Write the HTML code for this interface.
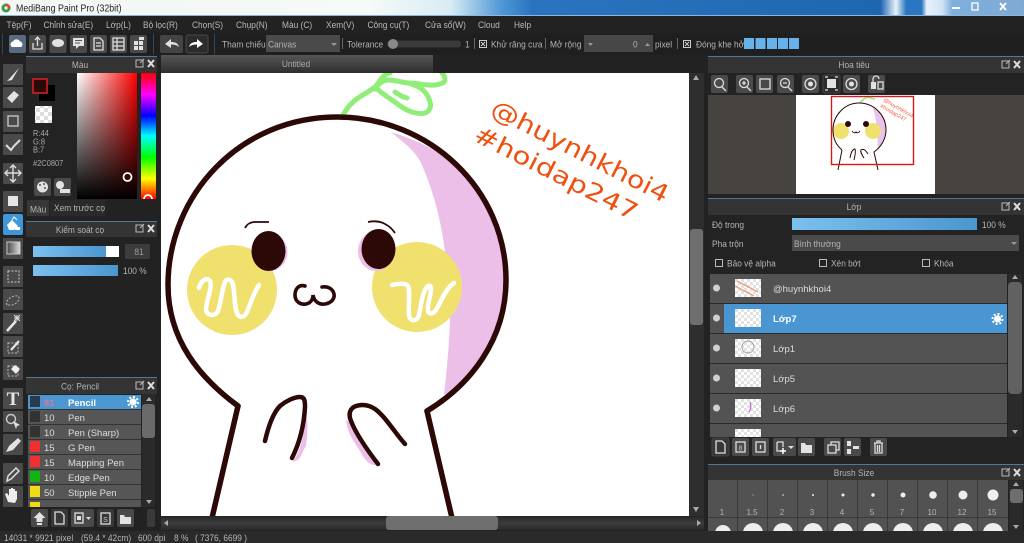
<!DOCTYPE html>
<html><head><meta charset="utf-8"><title>MediBang Paint Pro</title>
<style>
html,body{margin:0;padding:0;background:#222;width:1024px;height:543px;overflow:hidden}
svg{display:block}
text{font-family:"Liberation Sans",sans-serif;font-size:9.5px;fill:#b4b4b4;transform-box:fill-box;transform-origin:0 50%;transform:scaleX(.88)}
text.c{transform-origin:50% 50%}
text.r{fill:#ddd;transform:none}
text.n{transform:none}
.m text{fill:#b8b8b8}
.b{fill:#4a4a4a}
.c{text-anchor:middle}
.i{fill:none;stroke:#ddd;stroke-width:1.3}
.f{fill:#e2e2e2}
</style></head><body>
<svg width="1024" height="543" viewBox="0 0 1024 543" xmlns="http://www.w3.org/2000/svg">
<defs>
<linearGradient id="tb" x1="0" x2="1" y1="0" y2="0">
<stop offset="0" stop-color="#f3f6f2"/><stop offset=".36" stop-color="#f6faf8"/><stop offset=".44" stop-color="#d8ecf4"/><stop offset=".49" stop-color="#4f97d6"/><stop offset=".52" stop-color="#2a74bf"/><stop offset=".86" stop-color="#1f66b0"/><stop offset=".875" stop-color="#e8f2fb"/><stop offset=".885" stop-color="#2a76c0"/><stop offset=".9" stop-color="#2a76c0"/><stop offset=".905" stop-color="#e8f2fb"/><stop offset=".92" stop-color="#d0e4f5"/><stop offset=".93" stop-color="#7fb0dc"/><stop offset="1" stop-color="#7fa9d0"/>
</linearGradient>
<linearGradient id="blue" x1="0" x2="1" y1="0" y2="0"><stop offset="0" stop-color="#7cc0f0"/><stop offset="1" stop-color="#4b96cf"/></linearGradient>
<linearGradient id="tab" x1="0" x2="0" y1="0" y2="1"><stop offset="0" stop-color="#565656"/><stop offset="1" stop-color="#2e2e2e"/></linearGradient>
<linearGradient id="sb" x1="0" x2="0" y1="0" y2="1"><stop offset="0" stop-color="#262626"/><stop offset=".5" stop-color="#3c3c3c"/><stop offset="1" stop-color="#2a2a2a"/></linearGradient>
<linearGradient id="sat" x1="0" x2="1" y1="0" y2="0"><stop offset="0" stop-color="#fff"/><stop offset="1" stop-color="#f00"/></linearGradient>
<linearGradient id="val" x1="0" x2="0" y1="0" y2="1"><stop offset="0" stop-color="#000" stop-opacity="0"/><stop offset="1" stop-color="#000"/></linearGradient>
<linearGradient id="hue" x1="0" x2="0" y1="0" y2="1"><stop offset="0" stop-color="#f00"/><stop offset=".17" stop-color="#f0f"/><stop offset=".34" stop-color="#00f"/><stop offset=".5" stop-color="#0ff"/><stop offset=".67" stop-color="#0f0"/><stop offset=".84" stop-color="#ff0"/><stop offset="1" stop-color="#f00"/></linearGradient>
<linearGradient id="grad" x1="0" x2="1" y1="0" y2="0"><stop offset="0" stop-color="#444"/><stop offset="1" stop-color="#ddd"/></linearGradient>
<pattern id="chk" width="8" height="8" patternUnits="userSpaceOnUse"><rect width="8" height="8" fill="#fff"/><rect width="4" height="4" fill="#ddd"/><rect x="4" y="4" width="4" height="4" fill="#ddd"/></pattern>
<pattern id="chk2" width="6" height="6" patternUnits="userSpaceOnUse"><rect width="6" height="6" fill="#fff"/><rect width="3" height="3" fill="#e2e2e2"/><rect x="3" y="3" width="3" height="3" fill="#e2e2e2"/></pattern>
<g id="dock"><rect x="0" y="0" width="7" height="7" fill="none" stroke="#bbb"/><path d="M4 3l4-4" stroke="#bbb"/><path d="M12 0l6 7M18 0l-6 7" stroke="#ddd" stroke-width="2"/></g>
<g id="gear"><circle r="3.6" fill="#fff"/><circle r="5" fill="none" stroke="#fff" stroke-width="2" stroke-dasharray="2 1.9"/></g>
</defs>

<rect width="1024" height="543" fill="#222"/>

<!-- title bar -->
<rect width="1024" height="15" fill="url(#tb)"/>
<rect y="15" width="1024" height="1" fill="#8db6dc"/>
<circle cx="6" cy="8" r="4.5" fill="#3a9a4a"/><path d="M6 3.5a4.5 4.5 0 0 1 4.5 4.5H6z" fill="#d94c3a"/><circle cx="6" cy="8" r="1.6" fill="#fff"/>
<text x="16" y="11.5" style="font-size:10px;fill:#222">MediBang Paint Pro (32bit)</text>
<rect x="952" y="7" width="8" height="2" fill="#fff"/>
<rect x="972" y="3" width="6" height="7" fill="none" stroke="#fff" stroke-width="1.3"/>
<path d="M1000 3l6 7M1006 3l-6 7" stroke="#fff" stroke-width="1.8"/>

<!-- menu -->
<g class="m">
<text x="6.5" y="28">Tệp(F)</text><text x="43.5" y="28">Chỉnh sửa(E)</text><text x="106" y="28">Lớp(L)</text><text x="143" y="28">Bộ lọc(R)</text><text x="192" y="28">Chọn(S)</text><text x="236" y="28">Chụp(N)</text><text x="282" y="28">Màu (C)</text><text x="326" y="28">Xem(V)</text><text x="367.5" y="28">Công cụ(T)</text><text x="425" y="28">Cửa sổ(W)</text><text x="478" y="28">Cloud</text><text x="514" y="28">Help</text>
</g>

<!-- top toolbar -->
<rect y="33" width="1024" height="22" fill="#1f1f1f"/>
<rect x="2" y="34" width="1" height="20" fill="#2f4a60"/>
<rect x="153" y="34" width="1" height="20" fill="#2f4a60"/>
<rect x="214" y="34" width="1" height="20" fill="#2f4a60"/>
<rect x="9" y="35" width="17" height="18" rx="2" fill="#596b80"/>
<path d="M12 47a3 3 0 0 1 1-5.500 4 4 0 0 1 7 0 3 3 0 0 1 1 5.500z" fill="#fff"/>
<rect x="29" y="35" width="17" height="18" rx="2" class="b"/>
<path d="M33 43v6h9v-6M37.500 46v-8M35 40l2.500-3 2.500 3" class="i"/>
<rect x="49.500" y="35" width="17" height="18" rx="2" class="b"/>
<ellipse cx="58" cy="43" rx="6" ry="4" class="f"/>
<rect x="70" y="35" width="17" height="18" rx="2" class="b"/>
<rect x="73" y="38" width="11" height="8" class="f"/><path d="M76 46v3l3-3z" class="f"/><path d="M75 40.500h7M75 43h5" stroke="#555"/>
<rect x="90" y="35" width="17" height="18" rx="2" class="b"/>
<path d="M94 38h6l3 3v9h-9z" class="i"/><path d="M96 43h5M96 46h5" class="i"/>
<rect x="110" y="35" width="17" height="18" rx="2" class="b"/>
<rect x="113" y="38" width="11" height="12" class="i"/><path d="M113 42h11M113 46h11M117 38v12" class="i"/>
<rect x="130" y="35" width="17" height="18" rx="2" class="b"/>
<rect x="134" y="41" width="4" height="4" class="f"/><rect x="139" y="41" width="4" height="4" class="f"/><rect x="134" y="46" width="4" height="4" class="f"/><rect x="139" y="46" width="4" height="4" class="f"/><rect x="139" y="37" width="5" height="3" class="f"/>
<rect x="160" y="35" width="23" height="18" rx="2" fill="#444"/>
<path d="M165 44l6-5v3c4 0 7 1 8 5-2-2-5-2.500-8-2.500V48z" class="f"/>
<rect x="186" y="35" width="22" height="18" rx="2" fill="#2c2c2c" stroke="#4a4a4a"/>
<path d="M203 44l-6-5v3c-4 0-7 1-8 5 2-2 5-2.500 8-2.500V48z" fill="#fff"/>
<text x="222" y="47.500">Tham chiếu</text>
<rect x="266" y="35" width="74" height="17" fill="#4a4a4a"/>
<text x="268" y="47.500">Canvas</text><path d="M331 43h6l-3 3z" fill="#999"/>
<rect x="342" y="38" width="1" height="11" fill="#666"/>
<text x="347" y="47.500">Tolerance</text>
<rect x="387" y="40.500" width="74" height="7" rx="3" fill="#3a3a3a"/>
<circle cx="393" cy="44" r="5" fill="#8a8a8a"/>
<text x="465" y="47.500">1</text>
<rect x="474" y="38" width="1" height="11" fill="#666"/>
<rect x="479.500" y="40.500" width="7" height="7" fill="none" stroke="#ccc"/><path d="M481 42l4 4M485 42l-4 4" stroke="#ccc"/>
<text x="491" y="47.500">Khử răng cưa</text>
<rect x="545" y="38" width="1" height="11" fill="#666"/>
<text x="550" y="47.500">Mở rộng</text>
<rect x="584" y="35" width="69" height="17" fill="#474747"/>
<path d="M588 43h5l-2.500 3z" fill="#999"/><path d="M645 46h5l-2.500-3z" fill="#999"/>
<text x="633" y="47.500">0</text>
<text x="655" y="47.500">pixel</text>
<rect x="677" y="38" width="1" height="11" fill="#666"/>
<rect x="683.500" y="40.500" width="7" height="7" fill="none" stroke="#ccc"/><path d="M685 42l4 4M689 42l-4 4" stroke="#ccc"/>
<text x="696" y="47.500">Đóng khe hở</text>
<rect x="744" y="38" width="10" height="11" fill="#67b2ea"/><rect x="755.500" y="38" width="10" height="11" fill="#67b2ea"/><rect x="767" y="38" width="10" height="11" fill="#67b2ea"/><rect x="778" y="38" width="10" height="11" fill="#67b2ea"/><rect x="789" y="38" width="10" height="11" fill="#67b2ea"/>

<!-- left tools -->
<g id="tools">
<rect x="3" y="64" width="20" height="21" rx="1" class="b"/><path d="M7 81l3-3 9-10-7 12z" class="f"/>
<rect x="3" y="87" width="20" height="21" rx="1" class="b"/><path d="M7 98l7-7 5 4-7 8z" class="f"/>
<rect x="3" y="111" width="20" height="21" rx="1" class="b"/><rect x="8" y="116" width="10" height="10" fill="none" stroke="#bbb" stroke-width="1.500"/>
<rect x="3" y="134" width="20" height="21" rx="1" class="b"/><path d="M6 145l5 5 3-4 6-6" fill="none" stroke="#ddd" stroke-width="2"/>
<rect x="3" y="163" width="20" height="21" rx="1" class="b"/><path d="M13 165v17M5 173h16M10 168l3-3 3 3M10 179l3 3 3-3M8 170l-3 3 3 3M18 170l3 3-3 3" fill="none" stroke="#ddd" stroke-width="1.400"/>
<rect x="3" y="191" width="20" height="21" rx="1" class="b"/><rect x="8" y="196" width="10" height="10" fill="#e6e6e6"/>
<rect x="3" y="214" width="20" height="21" rx="2" fill="#3f97d8"/><path d="M7 225l5-5 6 6-4 4H9z" fill="#fff"/><path d="M12 220l2-3 3 3" fill="none" stroke="#fff"/><rect x="15" y="227" width="5" height="3" fill="#fff"/>
<rect x="3" y="238" width="20" height="21" rx="1" class="b"/><rect x="7" y="242" width="13" height="12" fill="url(#grad)" stroke="#ccc"/>
<rect x="3" y="266" width="20" height="21" rx="1" class="b"/><rect x="8" y="271" width="11" height="11" fill="none" stroke="#ccc" stroke-dasharray="2 1.500"/>
<rect x="3" y="289" width="20" height="21" rx="1" class="b"/><path d="M7 305c-2-5 5-10 11-9 3 2-1 9-7 9z" fill="none" stroke="#bbb" stroke-dasharray="2 1.500"/>
<rect x="3" y="313" width="20" height="21" rx="1" class="b"/><path d="M7 331l9-10" stroke="#e6e6e6" stroke-width="2.500"/><path d="M17 315v6M14 318h6M14 315l6 6M20 315l-6 6" stroke="#ddd"/>
<rect x="3" y="336" width="20" height="21" rx="1" class="b"/><rect x="8" y="343" width="10" height="10" fill="none" stroke="#bbb" stroke-dasharray="2 1.500"/><path d="M11 350l8-9" stroke="#e6e6e6" stroke-width="2.200"/>
<rect x="3" y="359" width="20" height="21" rx="1" class="b"/><rect x="8" y="366" width="10" height="10" fill="none" stroke="#bbb" stroke-dasharray="2 1.500"/><path d="M11 369l4-4 5 4-4 5z" fill="#eee"/>
<rect x="3" y="388" width="20" height="21" rx="1" class="b"/><text x="13" y="405" class="c n" style="font-family:'Liberation Serif',serif;font-size:19px;font-weight:bold;fill:#e6e6e6">T</text>
<rect x="3" y="411" width="20" height="21" rx="1" class="b"/><circle cx="11" cy="419" r="4.500" fill="none" stroke="#ccc" stroke-width="1.400"/><path d="M13 421l7 4-3 1-1 3z" class="f"/>
<rect x="3" y="434" width="20" height="21" rx="1" class="b"/><path d="M6 452l3-6 9-8 3 3-8 9z" class="f"/>
<rect x="3" y="463" width="20" height="21" rx="1" class="b"/><path d="M7 481l1-5 8-8 3 3-8 8z" fill="none" stroke="#ddd" stroke-width="1.500"/>
<rect x="3" y="486" width="20" height="21" rx="1" class="b"/><path d="M8 502l-3-8 2-1 2 3v-7h2v5-6h2v6-5h2v6-4h2v8l-2 4z" fill="#eee"/>
</g>

<!-- colour panel -->
<rect x="26" y="56" width="131" height="1" fill="#4c7a9c"/>
<rect x="26" y="57" width="131" height="16" fill="#343434"/>
<text x="80" y="68" class="c">Màu</text>
<use href="#dock" x="136" y="60"/>
<rect x="26" y="73" width="131" height="127" fill="#232323"/>
<rect x="39" y="85" width="16" height="16" fill="#000"/>
<rect x="33" y="79" width="14" height="14" fill="#2c0807" stroke="#d22" stroke-width="1.500"/>
<rect x="35" y="106" width="17" height="17" fill="url(#chk)"/>
<text x="33" y="136" style="font-size:8.500px;fill:#aaa">R:44</text>
<text x="33" y="144.500" style="font-size:8.500px;fill:#aaa">G:8</text>
<text x="33" y="152.500" style="font-size:8.500px;fill:#aaa">B:7</text>
<text x="33" y="166" style="font-size:8.500px;fill:#aaa">#2C0807</text>
<rect x="34" y="178" width="17" height="18" rx="2" class="b"/><circle cx="42.500" cy="187" r="5.500" class="f"/><circle cx="40" cy="185" r="1" fill="#555"/><circle cx="44" cy="184" r="1" fill="#555"/><circle cx="45" cy="188" r="1" fill="#555"/>
<rect x="54" y="178" width="17" height="18" rx="2" class="b"/><circle cx="60" cy="185" r="4" class="f"/><rect x="60" y="189" width="10" height="4" class="f"/>
<rect x="77" y="73" width="60" height="126" fill="url(#sat)"/>
<rect x="77" y="73" width="60" height="126" fill="url(#val)"/>
<rect x="141" y="73" width="15" height="126" fill="url(#hue)"/>
<circle cx="127.500" cy="177" r="4" fill="none" stroke="#fff" stroke-width="1.800"/>
<path d="M144 199a4 4 0 0 1 8 0" fill="none" stroke="#fff" stroke-width="1.800"/>
<rect x="26" y="200" width="131" height="16" fill="#222"/>
<rect x="27" y="200" width="22" height="16" fill="#373737"/>
<rect x="50" y="200" width="55" height="16" fill="#2a2a2a"/>
<text x="30" y="212.500">Màu</text>
<text x="54" y="211">Xem trước cọ</text>

<!-- brush control -->
<rect x="26" y="221" width="131" height="1" fill="#4c7a9c"/>
<rect x="26" y="222" width="131" height="15" fill="#343434"/>
<text x="80" y="233" class="c">Kiểm soát cọ</text>
<use href="#dock" x="136" y="225"/>
<rect x="33" y="246" width="86" height="11" fill="#fff"/>
<rect x="33" y="246" width="73" height="11" fill="url(#blue)"/>
<rect x="125" y="244" width="25" height="15" rx="1" fill="#3c3c3c"/>
<text x="139" y="255" class="c" style="fill:#999">81</text>
<rect x="33" y="265" width="85" height="11" fill="url(#blue)"/>
<text x="123" y="274">100 %</text>

<!-- brush list -->
<rect x="26" y="377" width="131" height="1" fill="#4c7a9c"/>
<rect x="26" y="378" width="131" height="16" fill="#343434"/>
<text x="80" y="389.500" class="c">Cọ: Pencil</text>
<use href="#dock" x="136" y="382"/>
<rect x="28" y="395" width="113" height="112" fill="#565656"/>
<rect x="28" y="395" width="113" height="14" fill="#4b97d2"/>
<g fill="#333"><rect x="28" y="409" width="113" height="1"/><rect x="28" y="424" width="113" height="1"/><rect x="28" y="439" width="113" height="1"/><rect x="28" y="454" width="113" height="1"/><rect x="28" y="469" width="113" height="1"/><rect x="28" y="484" width="113" height="1"/><rect x="28" y="499" width="113" height="1"/></g>
<rect x="30" y="396" width="10" height="11" fill="#2b3a4a"/>
<rect x="30" y="411" width="10" height="11" fill="#333"/>
<rect x="30" y="426" width="10" height="11" fill="#333"/>
<rect x="30" y="441" width="10" height="11" fill="#f03030"/>
<rect x="30" y="456" width="10" height="11" fill="#f03030"/>
<rect x="30" y="471" width="10" height="11" fill="#10b510"/>
<rect x="30" y="486" width="10" height="11" fill="#f0dc14"/>
<rect x="30" y="502" width="10" height="5" fill="#f0dc14"/>
<text class="r" x="44" y="406" style="fill:#d77a9a;font-weight:bold">81</text>
<text class="r" x="68" y="406" style="fill:#fff;font-weight:bold">Pencil</text>
<use href="#gear" x="133" y="402"/>
<text class="r" x="44" y="421">10</text><text class="r" x="68" y="421">Pen</text>
<text class="r" x="44" y="436">10</text><text class="r" x="68" y="436">Pen (Sharp)</text>
<text class="r" x="44" y="451">15</text><text class="r" x="68" y="451">G Pen</text>
<text class="r" x="44" y="466">15</text><text class="r" x="68" y="466">Mapping Pen</text>
<text class="r" x="44" y="481">10</text><text class="r" x="68" y="481">Edge Pen</text>
<text class="r" x="44" y="496">50</text><text class="r" x="68" y="496">Stipple Pen</text>
<rect x="142" y="394" width="13" height="113" fill="#2a2a2a"/>
<rect x="142" y="404" width="13" height="34" rx="3" fill="#6a6a6a"/>
<path d="M146 401h6l-3-4zM146 500h6l-3 4z" fill="#aaa"/>
<rect x="31" y="509" width="17" height="18" rx="2" class="b"/><path d="M39.500 512l-6 6h3v4h6v-4h3z" class="f"/><rect x="37" y="523" width="5" height="2" class="f"/>
<rect x="51" y="509" width="17" height="18" rx="2" fill="#383838"/><path d="M55 512h6l3 3v9h-9z" class="i"/>
<rect x="71" y="509" width="23" height="18" rx="2" class="b"/><rect x="75" y="513" width="8" height="10" class="i"/><rect x="77" y="516" width="4" height="4" class="f"/><path d="M86 517h5l-2.500 3z" fill="#ddd"/>
<rect x="97" y="509" width="17" height="18" rx="2" fill="#383838"/><rect x="101" y="513" width="9" height="11" class="i"/><text x="105.500" y="522" class="c n" style="font-size:7px;fill:#ccc">S</text>
<rect x="117" y="509" width="17" height="18" rx="2" class="b"/><path d="M120 515h4l1 2h6v7h-11z" class="f"/>
<rect x="147" y="509" width="8" height="18" rx="2" fill="#3a3a3a"/>

<!-- canvas tab -->
<rect x="161" y="55" width="272" height="18" fill="url(#tab)"/>
<text x="296" y="67" class="c" style="fill:#aaa">Untitled</text>

<!-- canvas -->
<rect x="161" y="73" width="528" height="443" fill="#fff"/>
<svg x="161" y="73" width="528" height="443" viewBox="161 73 528 443">
<path d="M343 115c4-7 9-13 15-17 6-4 12-7 17-11 3-3 6-9 10-12 1-1 3-2 5-2M375 87c5 5 11 9 17 13 7 5 13 10 20 12 6 2 13 2 15 0 4-3 4-7 3-10-1-5-4-9-7-12-5-4-11-6-15-7-7-1-14-3-20-3-5 0-9 3-13 9M408 83c9 0 20 3 27 2 5-1 10-2 10-5 0-3-1-5-3-7M395 92c4 3 8 5 12 6" fill="none" stroke="#90ee78" stroke-width="5" stroke-linecap="round" stroke-linejoin="round"/>
<path d="M391 132c14 12 27 20 33 38 12 30 18 55 22 90 7 40 4 80-2 135l19-12c27-33 43-63 43-103 0-90-56-130-115-148z" fill="#ecbfe8"/>
<circle cx="232" cy="290" r="45" fill="#f0e06e"/>
<circle cx="417" cy="287" r="45" fill="#f0e06e"/>
<path d="M199 288c2-8 8-11 11-7 3 6-4 20-4 28 0 7 9 8 12 2 3-8 4-22 7-29 2-4 7-3 8 3 2 9 1 24 5 30 3 4 7 1 9-3 3-7 6-18 12-27" fill="none" stroke="#fff" stroke-width="4.500" stroke-linecap="round" stroke-linejoin="round"/>
<path d="M392 285c5-1 12-2 15 0 4 3 1 20 2 30 1 7 8 7 10 0 2-9 3-22 8-28 2-2 4-2 4 2 0 6-4 16-3 22 1 4 5 3 8-1 4-6 9-21 18-27" fill="none" stroke="#fff" stroke-width="4.500" stroke-linecap="round" stroke-linejoin="round"/>
<ellipse cx="270" cy="252" rx="17.500" ry="19" fill="#ecbfe8"/>
<ellipse cx="376" cy="251" rx="18" ry="20" fill="#ecbfe8"/>
<ellipse cx="268.500" cy="251" rx="17" ry="20" fill="#2c0807"/>
<ellipse cx="378.500" cy="249" rx="17" ry="20" fill="#2c0807"/>
<path d="M245 228c2-4 6-6 10-6h14" fill="none" stroke="#2c0807" stroke-width="1.800"/>
<path d="M368 222c5-1 12-1 17 2 4 2 8 6 10 9" fill="none" stroke="#2c0807" stroke-width="1.800"/>
<path d="M305 286c-6-2-10 3-10 9 0 7 6 10 11 9 5-1 7-5 7-9 1 7 7 10 12 9 6-1 10-5 9-10-1-5-6-8-12-7" fill="none" stroke="#2c0807" stroke-width="3.600" stroke-linecap="round"/>
<path d="M303 404c3 7 2 27-2 40-2 8-6 15-9 18l6-2c4-4 5-10 8-14 2-14 3-30-3-42zM346 420c1 12 8 22 14 31 4 8 9 14 15 14l4-1c-7-10-15-24-21-33-4-5-8-9-12-11z" fill="#ecbfe8"/>
<path d="M238 406c-38-28-70-66-70-121 0-90 72-168 169-168 93 0 169 73 169 163 0 60-36 105-79 131" fill="none" stroke="#2c0807" stroke-width="5.500" stroke-linecap="round" stroke-linejoin="round"/>
<path d="M238 406l-26 112M427 411l25 107" fill="none" stroke="#2c0807" stroke-width="5.500" stroke-linecap="round"/>
<path d="M265 441c3-13 8-28 15-35 6-5 14-9 20-9 5 0 5 5 5 10-1 18-5 35-13 51" fill="none" stroke="#2c0807" stroke-width="4.500" stroke-linecap="round"/>
<path d="M378 464c-10-13-22-30-27-43-3-7-1-13 5-15 7-2 13-1 19 3 10 7 20 24 30 35" fill="none" stroke="#2c0807" stroke-width="4.500" stroke-linecap="round"/>
<g transform="translate(489 114) rotate(27)"><text class="n" textLength="196" lengthAdjust="spacingAndGlyphs" style="font-family:'DejaVu Sans',sans-serif;font-size:24px;fill:#f0500f">@huynhkhoi4</text></g>
<g transform="translate(472 140) rotate(26.700)"><text class="n" textLength="180" lengthAdjust="spacingAndGlyphs" style="font-family:'DejaVu Sans',sans-serif;font-size:24px;fill:#f0500f">#hoidap247</text></g>
</svg>

<!-- scrollbars -->
<rect x="689" y="73" width="15" height="443" fill="#2e2e2e"/>
<rect x="690" y="229" width="13" height="96" rx="3" fill="#6e6e6e"/>
<path d="M693 80h6l-3-5zM693 507h6l-3 5z" fill="#aaa"/>
<rect x="161" y="516" width="543" height="14" fill="url(#sb)"/>
<rect x="386" y="516" width="112" height="14" rx="3" fill="#6e6e6e"/>
<path d="M168 520v6l-4-3zM697 520v6l4-3z" fill="#aaa"/>

<!-- navigator -->
<rect x="708" y="56" width="316" height="1" fill="#4c7a9c"/>
<rect x="708" y="57" width="316" height="16" fill="#343434"/>
<text x="854" y="68" class="c">Hoa tiêu</text>
<use href="#dock" x="1002" y="61"/>
<rect x="708" y="73" width="316" height="22" fill="#232323"/>
<rect x="711" y="75" width="17" height="18" rx="2" class="b"/><circle cx="719" cy="83" r="4.500" class="i"/><path d="M722 87l4 4" class="i"/>
<rect x="736" y="75" width="17" height="18" rx="2" class="b"/><circle cx="744" cy="83" r="4.500" class="i"/><path d="M747 87l4 4M742 83h4M744 81v4" class="i"/>
<rect x="756" y="75" width="17" height="18" rx="2" class="b"/><rect x="760" y="79" width="10" height="10" class="i"/>
<rect x="777" y="75" width="17" height="18" rx="2" class="b"/><circle cx="785" cy="83" r="4.500" class="i"/><path d="M788 87l4 4M783 83h4" class="i"/>
<rect x="802" y="75" width="17" height="18" rx="2" class="b"/><circle cx="810.500" cy="84" r="5.500" class="i"/><circle cx="810.500" cy="84" r="2.500" class="f"/>
<rect x="823" y="75" width="17" height="18" rx="2" fill="#2c2c2c" stroke="#444"/><rect x="827" y="79" width="9" height="9" class="f"/><path d="M825 77h3M835 77h3M825 90h3M835 90h3" class="i"/>
<rect x="843" y="75" width="17" height="18" rx="2" class="b"/><circle cx="851.500" cy="84" r="5.500" class="i"/><circle cx="851.500" cy="84" r="2.500" class="f"/>
<rect x="868" y="75" width="17" height="18" rx="2" class="b"/><rect x="871" y="82" width="5" height="7" class="f"/><rect x="878" y="82" width="5" height="7" class="i"/><path d="M873 82v-3a3 3 0 0 1 6 0" class="i"/>
<rect x="708" y="95" width="316" height="99" fill="#47433f"/>
<rect x="796" y="95" width="139" height="99" fill="#fff"/>
<g>
<path d="M860 103c2-3 5-5 8-6 3 1 5 2 7 2" fill="none" stroke="#90ee78" stroke-width="1.500"/>
<path d="M872 106c8 6 14 14 14 24 0 8-3 14-8 20-1-15-1-33-6-44z" fill="#e8c4ec"/>
<circle cx="841" cy="131" r="8" fill="#f0e06e"/><circle cx="873" cy="131" r="8" fill="#f0e06e"/>
<circle cx="848" cy="124" r="3" fill="#2c0807"/><circle cx="866" cy="124" r="3" fill="#2c0807"/>
<path d="M852 131q2 3 4 1q2 2 4-1" fill="none" stroke="#2c0807" stroke-width=".9"/>
<path d="M842 150c-6-5-9-12-9-20 0-15 12-27 26-27 15 0 27 12 27 27 0 9-5 17-12 22l4 18M842 150l-4 20M850 158c1-6 3-9 5-9 1 3 0 7-1 11M864 158c-2-3-4-6-3-8 3-2 5 1 7 4" fill="none" stroke="#2c0807" stroke-width="1"/>
<g transform="translate(883 101) rotate(30)"><text class="n" style="font-size:5.500px;fill:#f06040">@huynhkhoi4</text></g>
<g transform="translate(880 107) rotate(30)"><text class="n" style="font-size:5.500px;fill:#f06040">#hoidap247</text></g>
</g>
<rect x="831.500" y="96.500" width="82" height="68" fill="none" stroke="#d81818" stroke-width="1.400"/>

<!-- layers -->
<rect x="708" y="198" width="316" height="1" fill="#4c7a9c"/>
<rect x="708" y="199" width="316" height="16" fill="#343434"/>
<text x="854" y="210" class="c">Lớp</text>
<use href="#dock" x="1002" y="203"/>
<rect x="708" y="215" width="316" height="59" fill="#232323"/>
<text x="712" y="228">Độ trong</text>
<rect x="792" y="218" width="185" height="12" fill="url(#blue)"/>
<text x="982" y="228">100 %</text>
<text x="712" y="247">Pha trộn</text>
<rect x="792" y="235" width="227" height="16" fill="#4a4a4a"/>
<text x="794" y="247">Bình thường</text>
<path d="M1011 242h6l-3 3z" fill="#999"/>
<rect x="715.500" y="259.500" width="7" height="7" fill="none" stroke="#bbb"/><text x="727" y="266.500">Bảo vệ alpha</text>
<rect x="819.500" y="259.500" width="7" height="7" fill="none" stroke="#bbb"/><text x="831" y="266.500">Xén bớt</text>
<rect x="922.500" y="259.500" width="7" height="7" fill="none" stroke="#bbb"/><text x="934" y="266.500">Khóa</text>

<rect x="710" y="274" width="297" height="163" fill="#535353"/>
<rect x="724" y="304" width="283" height="29" fill="#4a96d2"/>
<g fill="#2a2a2a"><rect x="710" y="303" width="297" height="1"/><rect x="710" y="333" width="297" height="1"/><rect x="710" y="363" width="297" height="1"/><rect x="710" y="393" width="297" height="1"/><rect x="710" y="423" width="297" height="1"/></g>
<g fill="#d0d0d0"><circle cx="716.500" cy="288" r="3.500"/><circle cx="716.500" cy="318" r="3.500"/><circle cx="716.500" cy="348" r="3.500"/><circle cx="716.500" cy="378" r="3.500"/><circle cx="716.500" cy="408" r="3.500"/></g>
<rect x="735" y="279" width="26" height="18" fill="url(#chk2)"/>
<path d="M737 281l21 11M735 286l19 10" stroke="#eea080" stroke-width="1.500"/>
<rect x="735" y="309" width="26" height="18" fill="url(#chk2)"/>
<rect x="735" y="339" width="26" height="18" fill="url(#chk2)"/>
<circle cx="748" cy="347" r="6" fill="none" stroke="#888" stroke-width=".7"/>
<rect x="735" y="369" width="26" height="18" fill="url(#chk2)"/>
<rect x="735" y="399" width="26" height="18" fill="url(#chk2)"/>
<path d="M750 402c1 3 1 7-1 10" stroke="#c070c8" fill="none" stroke-width="1.300"/>
<rect x="735" y="429" width="26" height="8" fill="url(#chk2)"/>
<text class="r" x="773" y="292">@huynhkhoi4</text>
<text class="r" x="773" y="322" style="fill:#fff;font-weight:bold">Lớp7</text>
<use href="#gear" x="997.500" y="319"/>
<text class="r" x="773" y="352">Lớp1</text>
<text class="r" x="773" y="382">Lớp5</text>
<text class="r" x="773" y="412">Lớp6</text>
<rect x="1008" y="274" width="14" height="163" fill="#2a2a2a"/>
<rect x="1008" y="282" width="14" height="112" rx="4" fill="#616161"/>
<path d="M1012 279h6l-3-4zM1012 430h6l-3 4z" fill="#aaa"/>
<rect x="708" y="437" width="316" height="27" fill="#232323"/>
<rect x="712" y="438" width="17" height="18" rx="2" fill="#383838" stroke="#444"/><path d="M716 441h6l3 3v9h-9z" class="i"/>
<rect x="732" y="438" width="17" height="18" rx="2" class="b"/><rect x="736" y="442" width="9" height="10" class="i"/><text x="740.500" y="450.500" class="c n" style="font-size:7px;fill:#ccc">8</text>
<rect x="752" y="438" width="17" height="18" rx="2" class="b"/><rect x="756" y="442" width="9" height="10" class="i"/><path d="M760.500 445v4" class="i"/>
<rect x="773" y="438" width="23" height="18" rx="2" class="b"/><path d="M777 442h6v5M777 442v9h3" class="i"/><path d="M783 448v6M780 451h6" stroke="#fff" stroke-width="1.500"/><path d="M788 446h6l-3 3z" fill="#ddd"/>
<rect x="798" y="438" width="17" height="18" rx="2" class="b"/><path d="M801 443h4l1 2h6v8h-11z" class="f"/>
<rect x="824" y="438" width="17" height="18" rx="2" class="b"/><rect x="828" y="445" width="8" height="8" class="i"/><path d="M831 445v-3h8v8h-3" class="i"/>
<rect x="844" y="438" width="17" height="18" rx="2" class="b"/><rect x="847" y="441" width="4" height="5" class="f"/><rect x="847" y="449" width="4" height="5" class="f"/><rect x="853" y="446" width="6" height="3" class="f"/>
<rect x="870" y="438" width="17" height="18" rx="2" class="b"/><path d="M874 443h9M875 443v10h7v-10M877 443v-2h3v2M877.500 445v7M879.500 445v7" class="i"/>

<!-- brush size -->
<rect x="708" y="464" width="316" height="1" fill="#4c7a9c"/>
<rect x="708" y="465" width="316" height="15" fill="#343434"/>
<text x="854" y="476" class="c">Brush Size</text>
<use href="#dock" x="1002" y="469"/>
<rect x="708" y="480" width="300" height="51" fill="#525252"/>
<g fill="#3a3a3a"><rect x="708" y="517" width="300" height="1"/><rect x="737" y="480" width="1" height="51"/><rect x="767" y="480" width="1" height="51"/><rect x="797" y="480" width="1" height="51"/><rect x="827" y="480" width="1" height="51"/><rect x="857" y="480" width="1" height="51"/><rect x="887" y="480" width="1" height="51"/><rect x="917" y="480" width="1" height="51"/><rect x="947" y="480" width="1" height="51"/><rect x="977" y="480" width="1" height="51"/></g>
<g fill="#eee">
<circle cx="753" cy="495" r=".5"/><circle cx="783" cy="495" r=".8"/><circle cx="813" cy="495" r="1"/><circle cx="843" cy="495" r="1.500"/><circle cx="873" cy="495" r="1.700"/><circle cx="903" cy="495" r="2.500"/><circle cx="933" cy="495" r="3.800"/><circle cx="963" cy="495" r="4.500"/><circle cx="993" cy="495" r="5.500"/>
</g>
<svg x="708" y="518" width="300" height="13">
<g fill="#eee"><circle cx="15" cy="15" r="8"/><circle cx="45" cy="15" r="10"/><circle cx="75" cy="15" r="10"/><circle cx="105" cy="15" r="10"/><circle cx="135" cy="15" r="10"/><circle cx="165" cy="15" r="10"/><circle cx="195" cy="15" r="10"/><circle cx="225" cy="15" r="10"/><circle cx="255" cy="15" r="10"/><circle cx="285" cy="15" r="10"/></g>
</svg>
<text x="722" y="515" class="c n" style="font-size:8px">1</text><text x="752" y="515" class="c n" style="font-size:8px">1.5</text><text x="782" y="515" class="c n" style="font-size:8px">2</text><text x="812" y="515" class="c n" style="font-size:8px">3</text><text x="842" y="515" class="c n" style="font-size:8px">4</text><text x="872" y="515" class="c n" style="font-size:8px">5</text><text x="902" y="515" class="c n" style="font-size:8px">7</text><text x="932" y="515" class="c n" style="font-size:8px">10</text><text x="962" y="515" class="c n" style="font-size:8px">12</text><text x="992" y="515" class="c n" style="font-size:8px">15</text>
<rect x="1009" y="480" width="14" height="51" fill="#2a2a2a"/>
<rect x="1010" y="489" width="13" height="14" rx="3" fill="#6e6e6e"/>
<path d="M1013 486h6l-3-4zM1013 525h6l-3 4z" fill="#aaa"/>

<!-- status bar -->
<rect y="531" width="1024" height="12" fill="#2a2a2a"/>
<text x="4" y="541" style="fill:#b8b8b8">14031 * 9921 pixel</text>
<text x="81" y="541" style="fill:#b8b8b8">(59.4 * 42cm)</text>
<text x="138" y="541" style="fill:#b8b8b8">600 dpi</text>
<text x="174" y="541" style="fill:#b8b8b8">8 %</text>
<text x="195" y="541" style="fill:#b8b8b8">( 7376, 6699 )</text>
</svg>
</body></html>
